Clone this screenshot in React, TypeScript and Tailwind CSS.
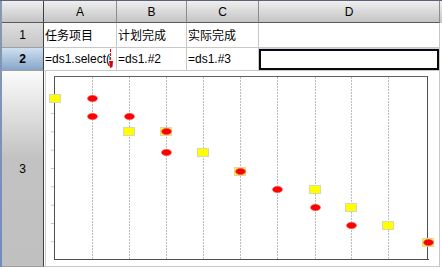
const cols = [55, 92, 129, 166, 203, 240, 277, 315, 351, 388, 428];

// plan (yellow) and actual (red) points: [column index, y]
const plan: [number, number][] = [
  [0, 98], [2, 131], [3, 131], [4, 152], [5, 171], [7, 189], [8, 207], [9, 225], [10, 242],
];
const actual: [number, number][] = [
  [1, 98], [1, 116], [2, 116], [3, 131], [3, 152], [5, 171], [6, 189], [7, 207], [8, 225], [10, 242],
];
const ticks = [94.7, 113, 131.3, 149.7, 168, 186.3, 204.7, 223, 241.3];

function Chart() {
  return (
    <svg className="absolute inset-0" width={395} height={195} viewBox="44 71 395 195">
      <line x1={45.5} y1={71} x2={45.5} y2={266} stroke="#d0d0d0" />
      {cols.slice(1, 10).map((x) => (
        <line key={x} x1={x + 0.5} y1={77} x2={x + 0.5} y2={259} stroke="#bdbdbd" strokeDasharray="2 1" />
      ))}
      {ticks.map((y) => (
        <line key={y} x1={51} y1={y + 0.5} x2={54} y2={y + 0.5} stroke="#c8c8c8" />
      ))}
      <rect x={54.5} y={76.5} width={373} height={183} fill="none" stroke="#9a9a9a" />
      <line x1={54.5} y1={76} x2={54.5} y2={260} stroke="#505050" />
      <line x1={54} y1={259.5} x2={429} y2={259.5} stroke="#505050" />
      <line x1={427.5} y1={76} x2={427.5} y2={260} stroke="#505050" />
      <line x1={54} y1={76.5} x2={428} y2={76.5} stroke="#606060" />
      {plan.map(([i, y]) => (
        <rect key={`p${i}-${y}`} x={cols[i] - 5.5} y={y - 3.5} width={11} height={8} fill="#ffff00" stroke="#d8d8b0" />
      ))}
      {actual.map(([i, y]) => (
        <ellipse key={`a${i}-${y}`} cx={cols[i] + 0.5} cy={y + 0.5} rx={5} ry={3.2} fill="#ff0000" stroke="#ff6060" strokeWidth={0.6} />
      ))}
    </svg>
  );
}

const colHead = 'flex items-center justify-center border-r border-r-[#8c8c8c] border-b border-b-[#5a5a5a] bg-linear-to-b from-[#efefef] to-[#c4c4c4] text-[12px] text-black';
const rowHead = 'flex items-center justify-center border-r border-r-[#404040] border-b border-b-[#a0a0a0] text-[12px] text-black';
const cell = 'relative flex items-center overflow-hidden whitespace-nowrap border-r border-b border-[#c8c8c8] bg-white pl-[1px] text-[12px] text-black';
const cjk = "font-['Noto_Sans_CJK_SC',sans-serif]";

export default function App() {
  return (
    <div className="flex h-[269px] w-[442px] flex-col overflow-hidden bg-white font-['Liberation_Sans',Arial,sans-serif]">
      <div className="h-px bg-[#5c6472]" />
      <div className="flex">
        <div className="w-[2px] bg-linear-to-b from-[#8a98b0] to-[#6f8cc2]" />
        <div className="grid grid-cols-[42px_73px_70px_72px_181px] grid-rows-[22px_25px_23px_196px]">
          <div className={colHead + ' border-r-[#404040]'} />
          <div className={colHead}>A</div>
          <div className={colHead}>B</div>
          <div className={colHead}>C</div>
          <div className={colHead}>D</div>

          <div className={rowHead + ' bg-linear-to-b from-[#dedede] to-[#c6c6c6]'}>1</div>
          <div className={cell + ' ' + cjk}>任务项目</div>
          <div className={cell + ' ' + cjk}>计划完成</div>
          <div className={cell + ' ' + cjk}>实际完成</div>
          <div className={cell} />

          <div className={rowHead + ' bg-linear-to-b from-[#cfe0f2] to-[#86a6c8] font-bold text-[#101828]'}>2</div>
          <div className={cell}>
            =ds1.select(
            <svg className="absolute left-[65px] top-0" width={4} height={21} viewBox="0 0 4 21">
              <line x1={1.5} y1={1} x2={1.5} y2={14} stroke="#ff0000" strokeDasharray="3 1" />
              <line x1={0.5} y1={8} x2={0.5} y2={12} stroke="#40c0e0" />
              <polygon points="0,13 4,13 3.5,19 1,20" fill="#e00000" />
            </svg>
          </div>
          <div className={cell}>=ds1.#2</div>
          <div className={cell}>=ds1.#3</div>
          <div className={cell + ' border-t border-t-[#d8cce8]'}>
            <div className="absolute inset-[0px] border-2 border-[#0a0a0a] outline outline-1 outline-[#b8e0b8]" />
          </div>

          <div className={rowHead + ' border-b-[#404040] bg-linear-to-b from-[#fbfbfb] via-[#c2c2c2] via-45% to-[#c0c0c0]'}>3</div>
          <div className="relative col-span-4 border-r border-b border-[#c8c8c8] bg-white">
            <Chart />
          </div>
        </div>
        <div className="flex-1 bg-linear-to-b from-[#efefef] to-[#c4c4c4] h-[22px]" />
      </div>
    </div>
  );
}
